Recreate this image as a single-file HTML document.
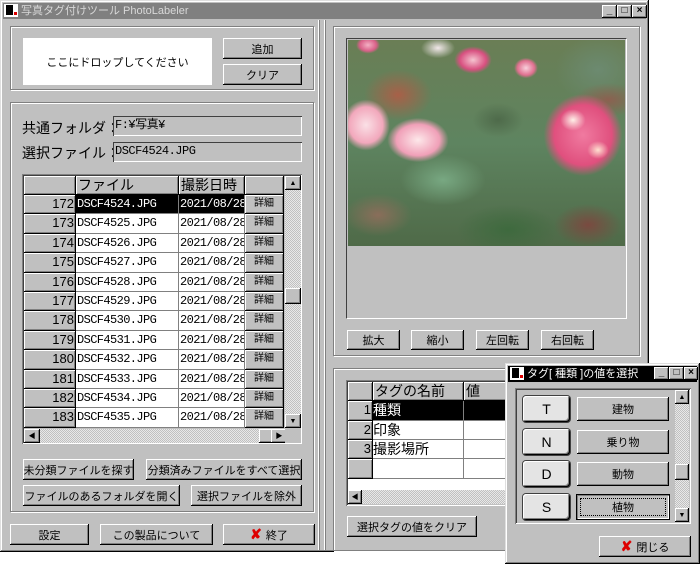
<!DOCTYPE html>
<html><head><meta charset="utf-8"><style>
*{box-sizing:border-box;margin:0;padding:0}
body{width:700px;height:564px;background:#fff;position:relative;overflow:hidden;font-family:"Liberation Sans","Noto Sans CJK JP",sans-serif;font-size:11px;color:#000}
.a{position:absolute}
.win{background:#c0c0c0;box-shadow:inset -1px -1px #000,inset 1px 1px #dfdfdf,inset -2px -2px #808080,inset 2px 2px #fff}
.btn{position:absolute;background:#c0c0c0;box-shadow:inset -1px -1px #000,inset 1px 1px #fff,inset -2px -2px #808080;display:flex;align-items:center;justify-content:center;font-size:11px}
.grp{position:absolute;border:1px solid #808080;box-shadow:1px 1px #fff,inset 1px 1px #fff}
.sunk{position:absolute;box-shadow:inset 1px 1px #808080,inset -1px -1px #fff,inset 2px 2px #404040}
.fld{position:absolute;background:#c0c0c0;box-shadow:inset 1px 1px #404040,inset -1px -1px #fff;font-family:"Liberation Mono","Noto Sans CJK JP",monospace;font-size:12px;letter-spacing:-0.5px;padding-left:2px;line-height:19px}
.cell{position:absolute;border-right:1px solid #808080;border-bottom:1px solid #808080;overflow:hidden;white-space:nowrap;font-size:13px;line-height:18px}
.hd{background:#c0c0c0;box-shadow:inset 1px 1px #fff,inset -1px -1px #808080;border-right:1px solid #000;border-bottom:1px solid #000}
.mono{font-family:"Liberation Mono","Noto Sans CJK JP",monospace;font-size:12px;letter-spacing:-0.6px;padding-left:1px}
.sbtn{position:absolute;width:16px;height:14px;background:#c0c0c0;box-shadow:inset -1px -1px #000,inset 1px 1px #fff,inset -2px -2px #808080;font-size:7px;display:flex;align-items:center;justify-content:center}
.track{position:absolute;background:repeating-conic-gradient(#c0c0c0 0 25%,#e8e8e8 0 50%) 0 0/2px 2px}
.tb{position:absolute;width:15px;height:13px;background:#c0c0c0;box-shadow:inset -1px -1px #000,inset 1px 1px #fff,inset -2px -2px #808080;font-size:10px;font-weight:bold;line-height:12px;text-align:center}
</style></head><body>

<div class="a win" style="left:0;top:0;width:649px;height:552px"></div>
<div class="a" style="left:3px;top:3px;width:643px;height:16px;background:#808080"></div>
<div class="a" style="left:4px;top:4px;width:14px;height:13px;background:#fff"><div class="a" style="left:2px;top:1px;width:7px;height:10px;background:#000"></div><div class="a" style="left:10px;top:8px;width:3px;height:3px;background:#d00"></div></div>
<div class="a" style="left:21px;top:3px;color:#d8d8d8;font-size:11px;line-height:16px">写真タグ付けツール PhotoLabeler</div>
<div class="tb" style="left:602px;top:5px">_</div>
<div class="tb" style="left:617px;top:5px">□</div>
<div class="tb" style="left:632px;top:5px">×</div>

<div class="grp" style="left:10px;top:26px;width:304px;height:64px"></div>
<div class="a" style="left:23px;top:38px;width:189px;height:47px;background:#fff;display:flex;align-items:center;justify-content:center;font-size:11px">ここにドロップしてください</div>
<div class="btn" style="left:223px;top:38px;width:79px;height:21px">追加</div>
<div class="btn" style="left:223px;top:64px;width:79px;height:21px">クリア</div>

<div class="grp" style="left:10px;top:102px;width:304px;height:410px"></div>
<div class="a" style="left:22px;top:118px;font-size:14px">共通フォルダ：</div>
<div class="fld" style="left:113px;top:116px;width:189px;height:20px">F:¥写真¥</div>
<div class="a" style="left:22px;top:143px;font-size:14px">選択ファイル：</div>
<div class="fld" style="left:113px;top:142px;width:189px;height:20px">DSCF4524.JPG</div>

<div class="sunk" style="left:22px;top:174px;width:280px;height:270px;background:#c0c0c0"></div>
<div class="a" style="left:24px;top:176px;width:260px;height:252px;overflow:hidden;background:#fff">
 <div class="cell hd" style="left:0;top:0;width:52px;height:19px"></div>
 <div class="cell hd" style="left:52px;top:0;width:103px;height:19px;font-size:14px;padding-left:2px">ファイル</div>
 <div class="cell hd" style="left:155px;top:0;width:66px;height:19px;font-size:14px;padding-left:2px">撮影日時</div>
 <div class="cell hd" style="left:221px;top:0;width:39px;height:19px"></div>
 <div id="rows"></div>
</div>
<div class="track" style="left:285px;top:176px;width:16px;height:252px"></div>
<div class="sbtn" style="left:285px;top:176px">▲</div>
<div class="btn" style="left:285px;top:288px;width:16px;height:16px"></div>
<div class="sbtn" style="left:285px;top:414px">▼</div>
<div class="track" style="left:24px;top:429px;width:261px;height:14px"></div>
<div class="sbtn" style="left:24px;top:429px">◀</div>
<div class="btn" style="left:259px;top:429px;width:14px;height:14px"></div>
<div class="sbtn" style="left:271px;top:429px">▶</div>
<div class="a" style="left:285px;top:429px;width:16px;height:14px;background:#c0c0c0"></div>

<div class="btn" style="left:23px;top:459px;width:111px;height:21px">未分類ファイルを探す</div>
<div class="btn" style="left:146px;top:459px;width:156px;height:21px">分類済みファイルをすべて選択</div>
<div class="btn" style="left:23px;top:485px;width:157px;height:21px">ファイルのあるフォルダを開く</div>
<div class="btn" style="left:191px;top:485px;width:111px;height:21px">選択ファイルを除外</div>

<div class="btn" style="left:10px;top:524px;width:79px;height:21px">設定</div>
<div class="btn" style="left:100px;top:524px;width:113px;height:21px">この製品について</div>
<div class="btn" style="left:223px;top:524px;width:92px;height:21px"><span style="color:#d00;font-weight:bold;font-size:14px;margin-right:4px">✘</span>終了</div>

<div class="a" style="left:318px;top:20px;width:2px;height:530px;border-left:1px solid #fff;border-right:1px solid #808080"></div>
<div class="a" style="left:324px;top:20px;width:2px;height:530px;border-left:1px solid #fff;border-right:1px solid #808080"></div>

<div class="grp" style="left:333px;top:26px;width:307px;height:330px"></div>
<div class="a" style="left:346px;top:38px;width:281px;height:281px;border-top:1px solid #404040;border-left:1px solid #404040;border-right:1px solid #fff;border-bottom:1px solid #fff"></div>
<div class="a" style="left:348px;top:40px;width:277px;height:206px;overflow:hidden;background:
radial-gradient(ellipse 14px 12px at 225px 80px,#fff0e8,transparent 90%),
radial-gradient(ellipse 12px 10px at 250px 110px,#ffe0d0,transparent 90%),
radial-gradient(ellipse 48px 50px at 235px 95px,#f07aa0 0,#e0507e 60%,transparent 82%),
radial-gradient(ellipse 36px 26px at 70px 100px,#fde8ea 0,#f0a0b8 60%,transparent 85%),
radial-gradient(ellipse 28px 30px at 18px 85px,#fae0e6 0,#f2a8bc 60%,transparent 85%),
radial-gradient(ellipse 22px 16px at 125px 20px,#f5c4d0 0,#d85080 60%,transparent 85%),
radial-gradient(ellipse 14px 10px at 20px 5px,#f4b0c4 0,#d86088 60%,transparent 85%),
radial-gradient(ellipse 14px 12px at 178px 28px,#f8d0dc 0,#e07090 60%,transparent 85%),
radial-gradient(ellipse 20px 12px at 90px 8px,#f2e8ea,transparent 85%),
radial-gradient(ellipse 40px 30px at 50px 55px,#a86048,transparent 85%),
radial-gradient(ellipse 40px 20px at 260px 60px,#8c6050,transparent 85%),
radial-gradient(ellipse 50px 30px at 95px 140px,#78a882,transparent 85%),
radial-gradient(ellipse 30px 20px at 150px 80px,#4e6a4a,transparent 85%),
radial-gradient(ellipse 50px 40px at 250px 30px,#6c8a70,transparent 85%),
radial-gradient(ellipse 40px 25px at 30px 175px,#8a6e5a,transparent 85%),
radial-gradient(ellipse 60px 30px at 160px 190px,#3e6a3e,transparent 85%),
radial-gradient(ellipse 40px 25px at 240px 185px,#7a4a40,transparent 85%),
linear-gradient(#6a7e55,#5e8460 50%,#4f6a48)"></div>
<div class="btn" style="left:347px;top:330px;width:53px;height:20px">拡大</div>
<div class="btn" style="left:411px;top:330px;width:53px;height:20px">縮小</div>
<div class="btn" style="left:476px;top:330px;width:53px;height:20px">左回転</div>
<div class="btn" style="left:541px;top:330px;width:53px;height:20px">右回転</div>

<div class="grp" style="left:333px;top:368px;width:307px;height:183px"></div>
<div class="sunk" style="left:346px;top:380px;width:170px;height:126px;background:#c0c0c0"></div>
<div class="a" style="left:348px;top:382px;width:170px;height:108px;background:#fff;overflow:hidden">
 <div class="cell hd" style="left:0;top:0;width:25px;height:19px"></div>
 <div class="cell hd" style="left:25px;top:0;width:91px;height:19px;font-size:14px;padding-left:2px">タグの名前</div>
 <div class="cell hd" style="left:116px;top:0;width:60px;height:19px;font-size:14px;padding-left:2px">値</div>
 <div class="cell hd" style="left:0;top:19px;width:25px;height:20px;text-align:right;padding-right:1px">1</div>
 <div class="cell" style="left:25px;top:19px;width:91px;height:20px;background:#000;color:#fff;font-size:14px">種類</div>
 <div class="cell" style="left:116px;top:19px;width:60px;height:20px;background:#000"></div>
 <div class="cell hd" style="left:0;top:39px;width:25px;height:19px;text-align:right;padding-right:1px">2</div>
 <div class="cell" style="left:25px;top:39px;width:91px;height:19px;font-size:14px">印象</div>
 <div class="cell" style="left:116px;top:39px;width:60px;height:19px"></div>
 <div class="cell hd" style="left:0;top:58px;width:25px;height:19px;text-align:right;padding-right:1px">3</div>
 <div class="cell" style="left:25px;top:58px;width:91px;height:19px;font-size:14px">撮影場所</div>
 <div class="cell" style="left:116px;top:58px;width:60px;height:19px"></div>
 <div class="cell hd" style="left:0;top:77px;width:25px;height:20px"></div>
 <div class="cell" style="left:25px;top:77px;width:91px;height:20px"></div>
 <div class="cell" style="left:116px;top:77px;width:60px;height:20px"></div>
</div>
<div class="track" style="left:348px;top:490px;width:168px;height:14px"></div>
<div class="sbtn" style="left:348px;top:490px;width:14px">◀</div>
<div class="btn" style="left:347px;top:516px;width:130px;height:21px">選択タグの値をクリア</div>

<div class="a win" style="left:505px;top:363px;width:195px;height:201px"></div>
<div class="a" style="left:508px;top:366px;width:189px;height:16px;background:#000"></div>
<div class="a" style="left:510px;top:367px;width:14px;height:13px;background:#fff"><div class="a" style="left:2px;top:1px;width:7px;height:10px;background:#000"></div><div class="a" style="left:10px;top:8px;width:3px;height:3px;background:#d00"></div></div>
<div class="a" style="left:527px;top:366px;color:#fff;font-size:11px;line-height:16px">タグ[ 種類 ]の値を選択</div>
<div class="tb" style="left:654px;top:367px">_</div>
<div class="tb" style="left:669px;top:367px">□</div>
<div class="tb" style="left:684px;top:367px;width:14px">×</div>

<div class="sunk" style="left:515px;top:388px;width:176px;height:136px;background:#c0c0c0"></div>
<div class="track" style="left:675px;top:390px;width:14px;height:132px"></div>
<div class="sbtn" style="left:675px;top:390px;width:14px">▲</div>
<div class="btn" style="left:675px;top:464px;width:14px;height:16px"></div>
<div class="sbtn" style="left:675px;top:508px;width:14px">▼</div>

<div id="dlg"></div>

<div class="btn" style="left:599px;top:536px;width:92px;height:21px"><span style="color:#d00;font-weight:bold;font-size:14px;margin-right:4px">✘</span>閉じる</div>

<script>
var r=document.getElementById('rows'),h='';
for(var i=0;i<13;i++){var n=172+i,t=19+i*19.4,sel=i==0;
h+='<div class="cell hd" style="left:0;top:'+t+'px;width:52px;height:19.4px;text-align:right;padding-right:1px">'+n+'</div>';
h+='<div class="cell mono" style="left:52px;top:'+t+'px;width:103px;height:19.4px;'+(sel?'background:#000;color:#fff':'')+'">DSCF'+(4524+i)+'.JPG</div>';
h+='<div class="cell mono" style="left:155px;top:'+t+'px;width:66px;height:19.4px;'+(sel?'background:#000;color:#fff':'')+'">2021/08/28</div>';
h+='<div class="cell hd" style="left:221px;top:'+t+'px;width:39px;height:19.4px;font-size:10px;text-align:center">詳細</div>';}
r.innerHTML=h;
var d=document.getElementById('dlg'),L=['T','N','D','S'],V=['建物','乗り物','動物','植物'],g='';
for(var j=0;j<4;j++){var y=396+j*32.5;
g+='<div class="btn" style="left:523px;top:'+y+'px;width:47px;height:26px;background:#e4e4e4;border-radius:3px;font-size:14px;box-shadow:inset -1px -1px #000,inset 1px 1px #fff,inset -2px -2px #808080,0 0 0 1px #404040">'+L[j]+'</div>';
g+='<div class="btn" style="left:577px;top:'+(y+1)+'px;width:92px;height:24px;'+(j==3?'box-shadow:0 0 0 1px #000,inset 1px 1px #808080,inset -1px -1px #fff;outline:1px dotted #000;outline-offset:-4px':'')+'">'+V[j]+'</div>';}
d.innerHTML=g;
</script>
</body></html>
